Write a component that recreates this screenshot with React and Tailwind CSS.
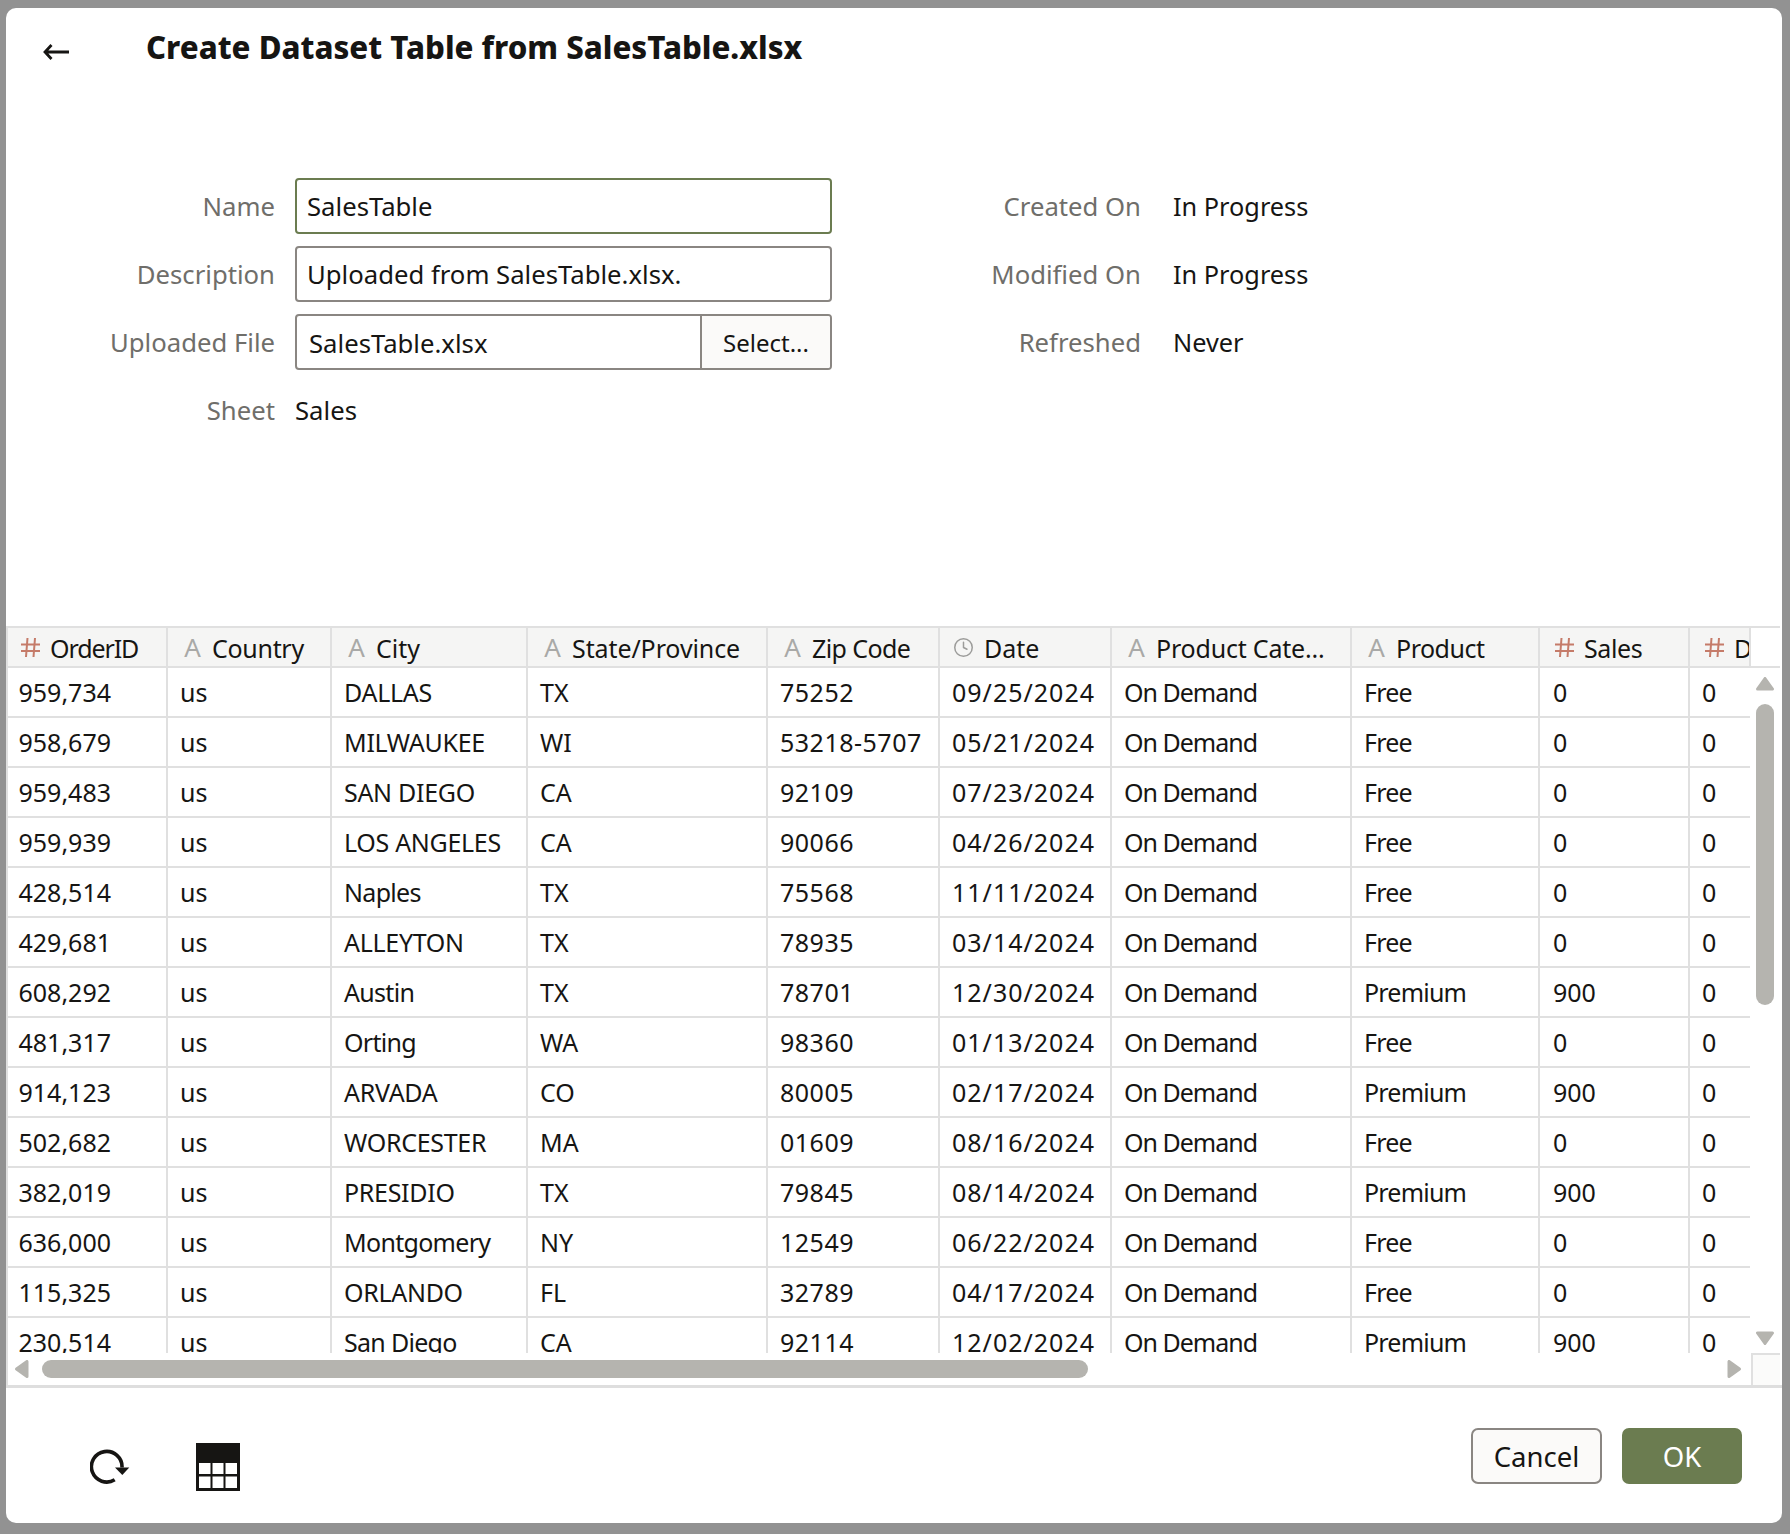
import { Clock } from 'lucide-react';

const columns = [
  { label: 'OrderID', type: 'num', w: 'w-[160px]', cell: 'pl-[10.500px]', head: 'pl-[13px]', text: 'tracking-[-1.1px]' },
  { label: 'Country', type: 'text', w: 'w-[164px]', cell: 'pl-[12px]', head: 'pl-[15px]', text: 'tracking-[-0.3px]' },
  { label: 'City', type: 'text', w: 'w-[196px]', cell: 'pl-[12px]', head: 'pl-[15px]', text: '' },
  { label: 'State/Province', type: 'text', w: 'w-[240px]', cell: 'pl-[12px]', head: 'pl-[15px]', text: 'tracking-[-0.1px]' },
  { label: 'Zip Code', type: 'text', w: 'w-[172px]', cell: 'pl-[12px] tracking-[0.5px]', head: 'pl-[15px]', text: 'tracking-[-0.6px]' },
  { label: 'Date', type: 'date', w: 'w-[172px]', cell: 'pl-[12px] tracking-[1px]', head: 'pl-[13px]', text: '' },
  { label: 'Product Cate...', type: 'text', w: 'w-[240px]', cell: 'pl-[12px] tracking-[-1px]', head: 'pl-[15px]', text: 'tracking-[-0.2px]' },
  { label: 'Product', type: 'text', w: 'w-[188px]', cell: 'pl-[12px] tracking-[-0.8px]', head: 'pl-[15px]', text: 'tracking-[-0.5px]' },
  { label: 'Sales', type: 'num', w: 'w-[150px]', cell: 'pl-[13px]', head: 'pl-[15px]', text: 'tracking-[-0.4px]' },
  { label: 'D', type: 'num', w: 'w-[61px]', cell: 'pl-[12px]', head: 'pl-[15px]', text: '' },
];

const rows = [
  ['959,734', 'us', 'DALLAS', 'TX', '75252', '09/25/2024', 'On Demand', 'Free', '0', '0'],
  ['958,679', 'us', 'MILWAUKEE', 'WI', '53218-5707', '05/21/2024', 'On Demand', 'Free', '0', '0'],
  ['959,483', 'us', 'SAN DIEGO', 'CA', '92109', '07/23/2024', 'On Demand', 'Free', '0', '0'],
  ['959,939', 'us', 'LOS ANGELES', 'CA', '90066', '04/26/2024', 'On Demand', 'Free', '0', '0'],
  ['428,514', 'us', 'Naples', 'TX', '75568', '11/11/2024', 'On Demand', 'Free', '0', '0'],
  ['429,681', 'us', 'ALLEYTON', 'TX', '78935', '03/14/2024', 'On Demand', 'Free', '0', '0'],
  ['608,292', 'us', 'Austin', 'TX', '78701', '12/30/2024', 'On Demand', 'Premium', '900', '0'],
  ['481,317', 'us', 'Orting', 'WA', '98360', '01/13/2024', 'On Demand', 'Free', '0', '0'],
  ['914,123', 'us', 'ARVADA', 'CO', '80005', '02/17/2024', 'On Demand', 'Premium', '900', '0'],
  ['502,682', 'us', 'WORCESTER', 'MA', '01609', '08/16/2024', 'On Demand', 'Free', '0', '0'],
  ['382,019', 'us', 'PRESIDIO', 'TX', '79845', '08/14/2024', 'On Demand', 'Premium', '900', '0'],
  ['636,000', 'us', 'Montgomery', 'NY', '12549', '06/22/2024', 'On Demand', 'Free', '0', '0'],
  ['115,325', 'us', 'ORLANDO', 'FL', '32789', '04/17/2024', 'On Demand', 'Free', '0', '0'],
  ['230,514', 'us', 'San Diego', 'CA', '92114', '12/02/2024', 'On Demand', 'Premium', '900', '0'],
];

function TypeIcon({ type }) {
  if (type === 'num') {
    return (
      <svg width="19" height="19" viewBox="0 0 19 19" fill="none" stroke="#c57b69" strokeWidth="2" className="shrink-0">
        <path d="M0 6.500h19M0 13h19M6.500 0 5 19M14 0l-1.500 19" />
      </svg>
    );
  }
  if (type === 'date') {
    return <Clock size={21} strokeWidth={1.7} color="#9c9c9a" className="shrink-0" />;
  }
  return <span className="w-[19px] shrink-0 text-center text-[26px] text-[#a9a9a7]">A</span>;
}

function Triangle({ dir }) {
  const points = {
    up: '9,1.500 16.500,12 1.500,12',
    down: '1.500,2 16.500,2 9,12.500',
    left: '12,1.500 12,16.500 1.500,9',
    right: '2,1.500 2,16.500 12.500,9',
  };
  const box = dir === 'up' || dir === 'down' ? [18, 14] : [14, 18];
  return (
    <svg width={box[0]} height={box[1]} viewBox={`0 0 ${box[0]} ${box[1]}`} className="shrink-0">
      <polygon points={points[dir]} fill="#b5b4af" stroke="#b5b4af" strokeWidth="3" strokeLinejoin="round" />
    </svg>
  );
}

function Label({ children }) {
  return <div className="pt-[2px] text-right text-[#6f6e6a]">{children}</div>;
}

export default function App() {
  return (
    <div className="h-[1534px] w-[1790px] overflow-hidden bg-[#929292] pl-[6px] pt-[8px] font-['Noto_Sans',sans-serif] text-[25px] leading-none text-[#161513]">
      <div className="flex h-[1515px] w-[1776px] flex-col overflow-hidden rounded-[10px] bg-white">
        {/* title bar */}
        <div className="flex h-[170px] shrink-0 items-start pl-[37px] pt-[21px]">
          <svg width="26" height="16" viewBox="0 0 26 16" fill="none" stroke="#161513" strokeWidth="2.800" className="mt-[15px]">
            <path d="M26 8H2M8.500 1 2 8l6.500 7" />
          </svg>
          <h1 className="ml-[77px] text-[31.200px] font-extrabold leading-[36px]">Create Dataset Table from SalesTable.xlsx</h1>
        </div>

        {/* form */}
        <div className="flex text-[25.700px]">
          <div className="grid w-[826px] grid-cols-[269px_537px] auto-rows-[56px] items-center gap-x-[20px] gap-y-3">
            <Label>Name</Label>
            <input readOnly value="SalesTable" className="h-full w-full rounded border-2 border-[#6b7c50] px-[10px] outline-none" />
            <Label>Description</Label>
            <input readOnly value="Uploaded from SalesTable.xlsx." className="h-full w-full rounded border-2 border-[#8a8682] px-[10px] outline-none" />
            <Label>Uploaded File</Label>
            <div className="flex h-full overflow-hidden rounded border-2 border-[#8a8682]">
              <input readOnly value="SalesTable.xlsx" className="min-w-0 flex-1 px-[12px] pt-[2px] outline-none" />
              <button className="w-[130px] border-l-2 border-[#8a8682] bg-[#fbfaf9] pt-[2px] text-[24px]">Select...</button>
            </div>
            <Label>Sheet</Label>
            <div className="pt-[2px]">Sales</div>
          </div>
          <div className="ml-[31px] grid grid-cols-[278px_auto] auto-rows-[56px] items-center gap-x-[32px] gap-y-3 self-start">
            <Label>Created On</Label>
            <div className="pt-[2px] text-[25.300px]">In Progress</div>
            <Label>Modified On</Label>
            <div className="pt-[2px] text-[25.300px]">In Progress</div>
            <Label>Refreshed</Label>
            <div className="pt-[2px] text-[25.300px]">Never</div>
          </div>
        </div>

        {/* data table */}
        <div className="mt-auto mr-[2px] border-l-2 border-[#e0e0e0]">
          <div className="flex h-[42px] border-y-2 border-[#e0e0e0]">
            {columns.map((col) => (
              <div key={col.label} className={`flex h-full shrink-0 items-center gap-[10px] overflow-hidden whitespace-nowrap border-r-2 border-[#e0e0e0] bg-[#f5f5f4] ${col.w} ${col.head}`}>
                <TypeIcon type={col.type} />
                <span className={`pt-[2px] ${col.text}`}>{col.label}</span>
              </div>
            ))}
          </div>
          <div className="flex h-[685px]">
            <div className="w-[1742px] shrink-0 overflow-hidden">
              {rows.map((row) => (
                <div key={row[0]} className="flex h-[50px] border-b-2 border-[#e0e0e0]">
                  {row.map((value, i) => (
                    <div key={i} className={`flex shrink-0 items-center whitespace-nowrap ${columns[i].w} ${columns[i].cell} ${i < 9 ? 'border-r-2 border-[#e0e0e0]' : ''} ${i === 2 ? (/[a-z]/.test(value) ? 'tracking-[-0.7px]' : 'tracking-[-0.3px]') : ''}`}>
                      {value}
                    </div>
                  ))}
                </div>
              ))}
            </div>
            <div className="ml-[6px] flex w-[18px] flex-col pb-2 pt-[9px]">
              <Triangle dir="up" />
              <div className="mt-[13px] h-[301px] rounded-full bg-[#b5b4af]" />
              <div className="flex-1" />
              <Triangle dir="down" />
            </div>
          </div>
          <div className="flex h-[32px] items-center pl-[7px]">
            <Triangle dir="left" />
            <div className="ml-[13px] h-[18px] w-[1046px] rounded-full bg-[#b5b4af]" />
            <div className="flex-1" />
            <Triangle dir="right" />
            <div className="ml-[10px] h-full w-[29px] border-l-2 border-t-2 border-[#e0e0e0] bg-[#fbfbfa]" />
          </div>
        </div>
        <div className="h-[3px] shrink-0 bg-[#dedede]" />

        {/* footer */}
        <div className="flex h-[135px] shrink-0 items-start pr-[40px]">
          <svg width="40" height="36" viewBox="0 0 40 36" fill="none" className="ml-[84px] mt-[60px]">
            <path d="M24.700 31.800A15.300 15.300 0 1 1 32 19.500" stroke="#161513" strokeWidth="3.600" />
            <path d="M25 19.500h14.300L32.300 27z" fill="#161513" />
          </svg>
          <svg width="44" height="48" viewBox="0 0 44 48" className="ml-[66px] mt-[55px]">
            <rect width="44" height="48" fill="#161513" />
            <path fill="#fff" d="M3 20h11.500v11H3zM16.500 20h11v11h-11zM29.500 20H41v11H29.500zM3 33.500h11.500V45H3zM16.500 33.500h11V45h-11zM29.500 33.500H41V45H29.500z" />
          </svg>
          <div className="flex-1" />
          <button className="mt-[40px] h-[56px] w-[131px] rounded-[7px] border-2 border-[#8a8682] bg-[#fbfaf9] pt-[2px] text-[27.500px]">Cancel</button>
          <button className="ml-5 mt-[40px] h-[56px] w-[120px] rounded-[7px] bg-[#6b7c50] pt-[2px] text-[27.500px] text-white">OK</button>
        </div>
      </div>
    </div>
  );
}
